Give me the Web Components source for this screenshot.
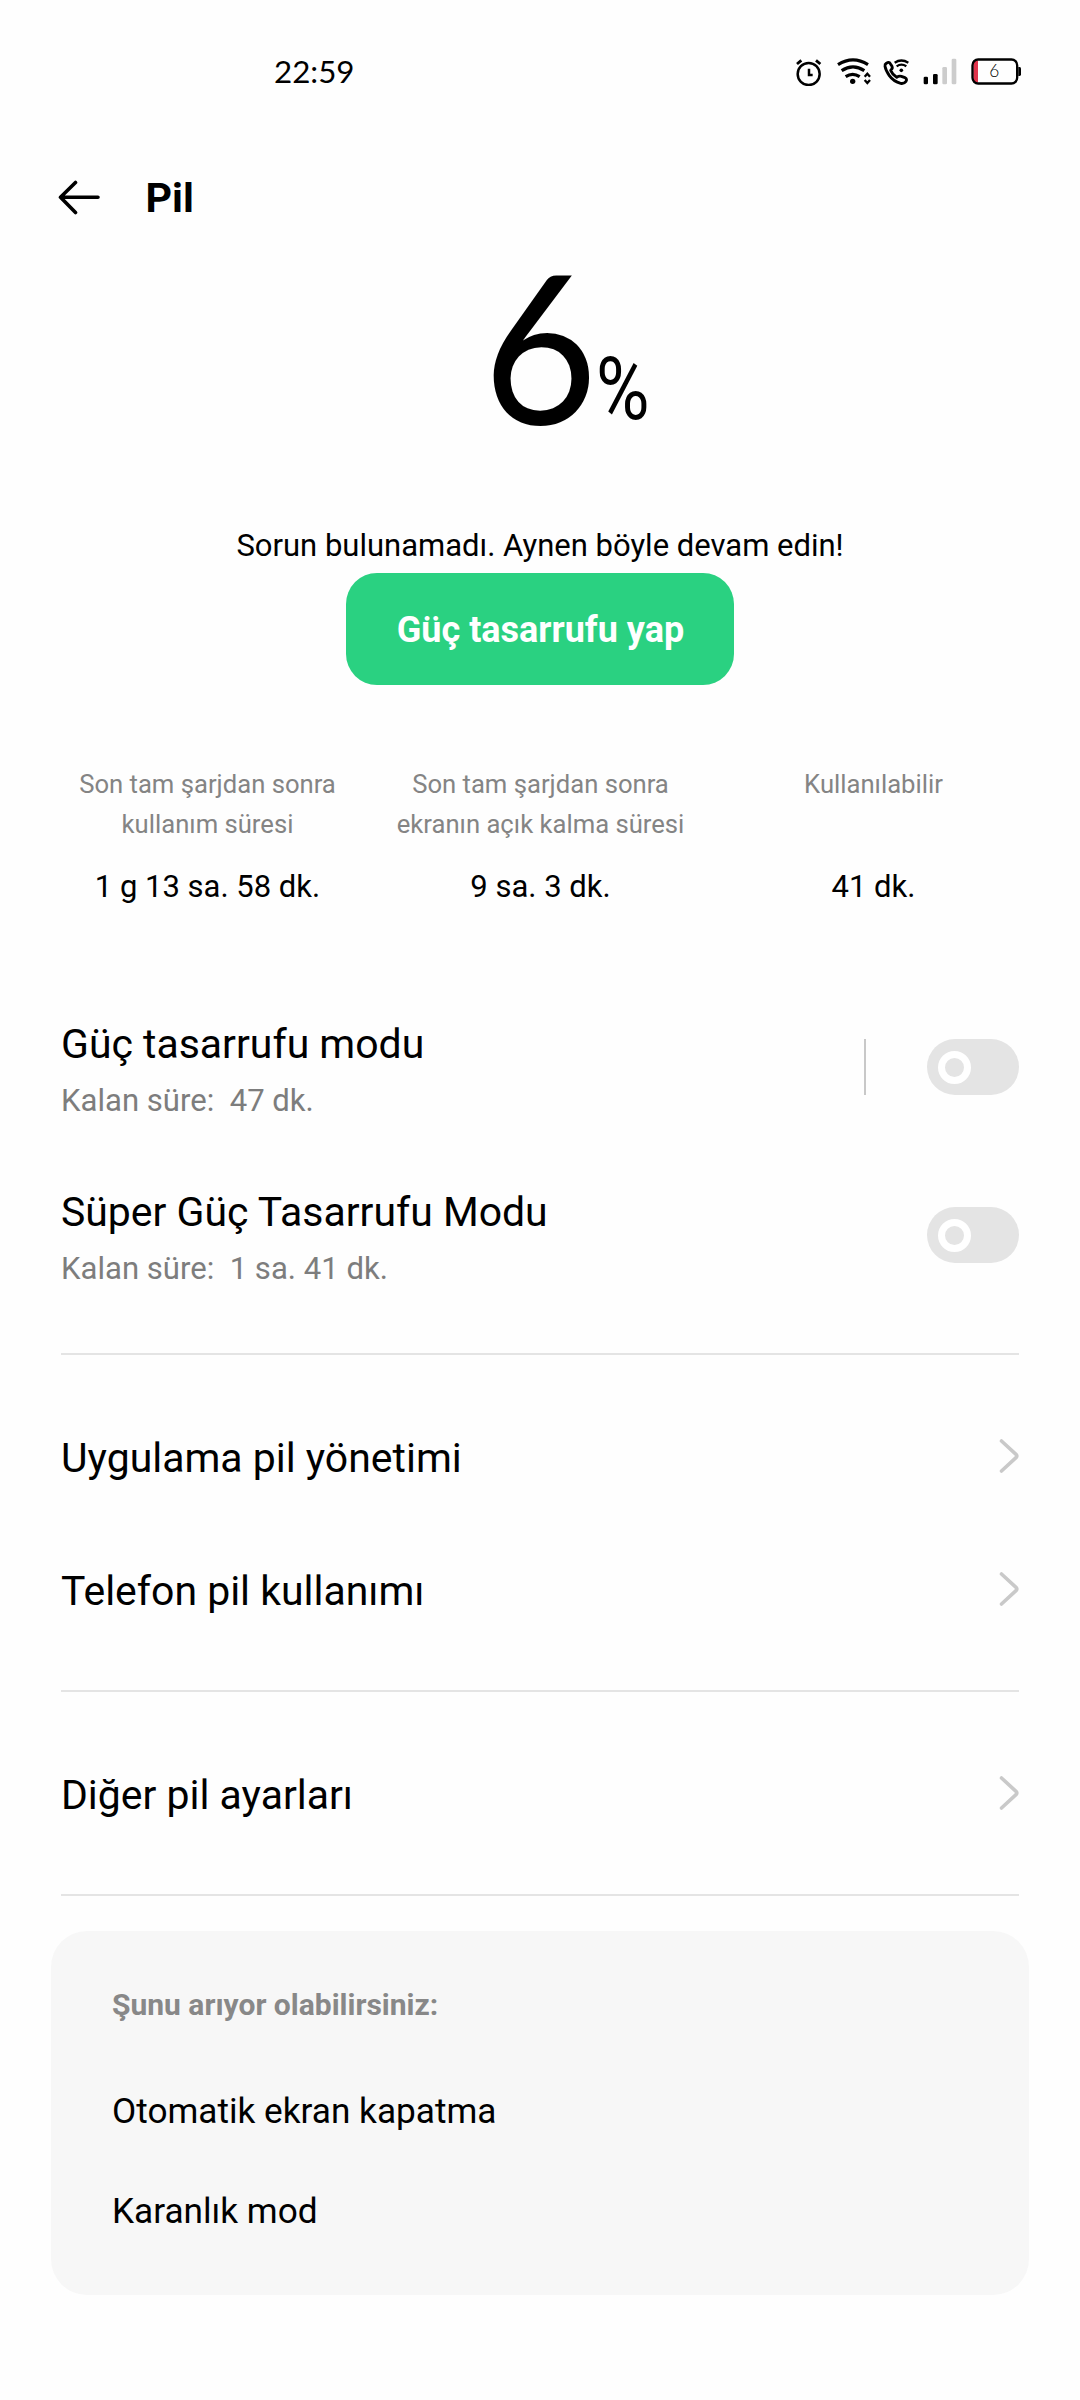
<!DOCTYPE html>
<html lang="tr">
<head>
<meta charset="utf-8">
<title>Pil</title>
<style>
  html, body { margin: 0; background: #fefefe; }
  body { width: 1080px; height: 2400px; overflow: hidden; color: #000; font-family: Roboto, sans-serif; }
</style>
</head>
<body>
<battery-page></battery-page>

<script>
const define = (name, html) => {
  const template = document.createElement('template');
  template.innerHTML = html;
  customElements.define(name, class extends HTMLElement {
    constructor() {
      super();
      this.attachShadow({ mode: 'open' }).appendChild(template.content.cloneNode(true));
    }
  });
};

define('status-bar', `
  <style>
    :host { display: flex; align-items: center; height: 142px; padding: 0 58px 0 274px; box-sizing: border-box; }
    .time { font: 400 31.3px/40px Lato, sans-serif; flex: 1; }
    .icons { display: flex; align-items: center; height: 30px; }
    svg { display: block; height: 30px; }
    .wifi { margin-left: 14px; } .call { margin-left: 10px; }
    .signal { margin-left: 13px; } .battery { margin-left: 13px; }
  </style>
  <span class="time">22:59</span>
  <div class="icons">
    <svg width="27" viewBox="45 33 81 90" fill="none" stroke="#000" stroke-width="7.5">
      <circle cx="86" cy="87" r="33"/><path d="M51 57L64 46M108 46L121 57" stroke-width="8.5"/><path d="M87 71V90H98" stroke-width="7.5"/>
    </svg>
    <svg class="wifi" width="36" viewBox="168 33 108 90" fill="none" stroke="#000" stroke-width="9.5">
      <path d="M174 59Q219 30 264 59M185 77Q219 54 253 77M197 95Q218 81 239 95"/>
      <circle cx="218" cy="109" r="8" fill="#000" stroke="none"/>
      <path d="M254 95L262 86L270 95M254 105L262 114L270 105" stroke-width="7"/>
    </svg>
    <svg class="call" width="28" viewBox="306 33 84 90" fill="none" stroke="#000" stroke-width="8.5" stroke-linejoin="round">
      <path d="M319 55Q327 49 331 56L336 64Q339 70 332 76Q338 90 350 97Q357 92 364 94L375 98Q382 102 378 109Q372 117 362 115Q341 110 328 92Q317 76 315 64Q314 58 319 55Z"/>
      <path d="M344 53Q364 40 385 53M350 64Q364 54 379 64" stroke-width="7"/><circle cx="364" cy="76" r="5.500" fill="#000" stroke="none"/>
    </svg>
    <svg class="signal" width="34" viewBox="429 33 102 90">
      <rect x="431" y="95" width="13" height="23" rx="4"/><rect x="459" y="87" width="14" height="31" rx="4"/>
      <g fill="#ccc"><rect x="487" y="66" width="14" height="52" rx="4"/><rect x="515" y="41" width="14" height="77" rx="4"/></g>
    </svg>
    <svg class="battery" width="52" viewBox="570 33 156 90">
      <path d="M585 47H594V112H585Q580 108 580 100V59Q580 51 585 47Z" fill="#e0344c"/>
      <rect x="577.500" y="43.500" width="134" height="72" rx="17" fill="none" stroke="#000" stroke-width="7"/>
      <path d="M715 66H719Q723 66 723 71V88Q723 93 719 93H715Z"/>
      <text x="643" y="97" text-anchor="middle" font-family="Lato, sans-serif" font-weight="300" font-size="52">6</text>
    </svg>
  </div>`);

define('page-header', `
  <style>
    :host { display: flex; align-items: center; height: 110px; padding-left: 58px; gap: 44.500px; }
    svg { display: block; }
    h1 { margin: 2px 0 0; font: 700 41.2px/50px Roboto, sans-serif; }
  </style>
  <svg width="43" height="36" viewBox="0 0 43 36" fill="none" stroke="#000" stroke-width="3.600" stroke-linecap="round" stroke-linejoin="round">
    <path d="M17.500 3.500L2.500 18.300L17.500 33.500M2.500 18.300H40" />
  </svg>
  <h1><slot></slot></h1>`);

define('battery-level', `
  <style>
    :host { display: flex; height: 265px; padding-left: 483px; }
    .value { width: 113px; font: 400 208px/183px Lato, sans-serif; transform: scaleX(.95); transform-origin: 0 0; }
    .unit { margin-top: 87px; font: 400 87px/100px Roboto, sans-serif; height: 100px; transform: scaleX(.84); transform-origin: 0 0; }
  </style>
  <span class="value"><slot></slot></span><span class="unit">%</span>`);

define('action-button', `
  <style>
    :host { display: block; }
    button { display: block; width: 388px; height: 112px; margin: 0 auto; padding: 1px 0 0 1px; border: 0; border-radius: 31px;
      background: #2ad181; color: #fff; font: 700 36px/112px Roboto, sans-serif; }
  </style>
  <button><slot></slot></button>`);

define('usage-stat', `
  <style>
    :host { display: flex; flex: 1; flex-direction: column; align-items: center; text-align: center; }
    .label { height: 80px; color: #848484; font-size: 25.650px; line-height: 40px; }
    .value { margin-top: 21px; font-size: 31px; line-height: 44px; }
  </style>
  <span class="label"><slot name="label"></slot></span>
  <span class="value"><slot></slot></span>`);

define('toggle-switch', `
  <style>
    :host { display: flex; align-items: center; width: 92px; height: 56px; padding-left: 11px; box-sizing: border-box; border-radius: 28px; background: #e4e4e4; }
    i { width: 19px; height: 19px; border: 7px solid #fff; border-radius: 50%; }
  </style><i></i>`);

define('mode-row', `
  <style>
    :host { display: flex; align-items: center; height: 168px; }
    .text { flex: 1; }
    .title { font-size: 40.950px; line-height: 54px; }
    .note { margin: 12px 0 -1px; color: #7d7d7d; font-size: 31.100px; line-height: 36px; white-space: pre; }
    .split { display: none; width: 2px; height: 56px; margin-right: 61px; background: #c8c8c8; }
    :host([split]) .split { display: block; }
  </style>
  <div class="text"><div class="title"><slot></slot></div><div class="note"><slot name="note"></slot></div></div>
  <div class="split"></div><toggle-switch></toggle-switch>`);

define('link-row', `
  <style>
    :host { display: flex; align-items: center; justify-content: space-between; height: 133px; font-size: 40.950px; line-height: 50px; }
    svg { display: block; margin-top: -1px; }
    span { margin-top: 2px; }
  </style>
  <span><slot></slot></span>
  <svg width="20" height="36" viewBox="0 0 20 36" fill="none" stroke="#c9c9c9" stroke-width="3.600" stroke-linecap="round" stroke-linejoin="round"><path d="M2.500 3L17 16.300Q18.600 18 17 19.700L2.500 33"/></svg>`);

define('section-divider', `
  <style>:host { display: block; height: 2px; margin: 34px 0 35px; background: #e4e4e4; }</style>`);

define('suggestion-card', `
  <style>
    :host { display: block; height: 364px; margin: 0 51px; padding: 54px 61px 0; box-sizing: border-box; border-radius: 36px; background: #f7f7f7; }
    .heading { margin-bottom: 36px; color: #888; font-size: 30px; font-weight: 700; line-height: 40px; }
    ::slotted(p) { margin: 0; font-size: 35.200px; line-height: 100px; }
  </style>
  <div class="heading"><slot name="heading"></slot></div><slot></slot>`);

define('battery-page', `
  <style>
    :host { display: block; width: 1080px; }
    .tagline { padding-top: 1px; font-size: 31px; line-height: 55px; text-align: center; }
    .tagline span { display: block; line-height: 56px; margin-bottom: -1px; }
    .stats { display: flex; padding: 79px 40px 0 41px; }
    .list { padding: 74px 61px 0; }
  </style>
  <status-bar></status-bar>
  <page-header>Pil</page-header>
  <battery-level>6</battery-level>
  <div class="tagline"><span>Sorun bulunamadı. Aynen böyle devam edin!</span></div>
  <action-button>Güç tasarrufu yap</action-button>
  <div class="stats">
    <usage-stat><span slot="label">Son tam şarjdan sonra<br>kullanım süresi</span>1 g 13 sa. 58 dk.</usage-stat>
    <usage-stat><span slot="label">Son tam şarjdan sonra<br>ekranın açık kalma süresi</span>9 sa. 3 dk.</usage-stat>
    <usage-stat><span slot="label">Kullanılabilir</span>41 dk.</usage-stat>
  </div>
  <div class="list">
    <mode-row split>Güç tasarrufu modu<span slot="note">Kalan süre:  47 dk.</span></mode-row>
    <mode-row>Süper Güç Tasarrufu Modu<span slot="note">Kalan süre:  1 sa. 41 dk.</span></mode-row>
    <section-divider></section-divider>
    <link-row>Uygulama pil yönetimi</link-row>
    <link-row>Telefon pil kullanımı</link-row>
    <section-divider></section-divider>
    <link-row>Diğer pil ayarları</link-row>
    <section-divider></section-divider>
  </div>
  <suggestion-card>
    <span slot="heading">Şunu arıyor olabilirsiniz:</span>
    <p>Otomatik ekran kapatma</p>
    <p>Karanlık mod</p>
  </suggestion-card>`);
</script>
</body>
</html>
